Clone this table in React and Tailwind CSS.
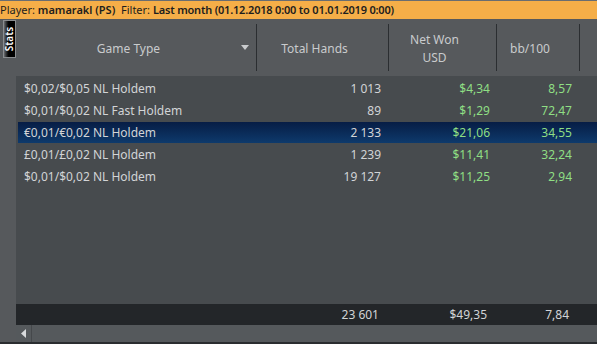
const rows = [
  { game: "$0,02/$0,05 NL Holdem", hands: "1 013", won: "$4,34", bb: "8,57" },
  { game: "$0,01/$0,02 NL Fast Holdem", hands: "89", won: "$1,29", bb: "72,47" },
  { game: "€0,01/€0,02 NL Holdem", hands: "2 133", won: "$21,06", bb: "34,55", selected: true },
  { game: "£0,01/£0,02 NL Holdem", hands: "1 239", won: "$11,41", bb: "32,24" },
  { game: "$0,01/$0,02 NL Holdem", hands: "19 127", won: "$11,25", bb: "2,94" },
];

const Sep = () => <div className="w-px self-stretch my-[5px] bg-[#2b2e31]" />;

export default function App() {
  return (
    <div
      className="w-[597px] h-[344px] overflow-hidden flex flex-col bg-[#56595c] text-[12px] text-[#d2d4d6]"
      style={{ fontFamily: '"Noto Sans", "Open Sans", sans-serif' }}
    >
      <div className="h-px bg-[#6a6d70]" />
      <div className="h-[18px] bg-[#f5ae48] text-[#1d1d1d] text-[11px] leading-[18px] flex whitespace-nowrap">
        <div className="w-[121px]">
          Player: <span className="font-semibold">mamarakl (PS)</span>
        </div>
        <div>
          Filter:{" "}
          <span className="font-semibold tracking-[-0.2px]">Last month (01.12.2018 0:00 to 01.01.2019 0:00)</span>
        </div>
      </div>
      <div className="flex flex-1 min-h-0">
        <div className="w-4 shrink-0 relative">
          <div className="absolute left-[3px] top-px w-[13px] h-[38px] border border-[#8a8d90] bg-gradient-to-r from-[#6a6d70] via-black to-black flex items-center justify-center">
            <span className="block -rotate-90 text-white text-[10px] font-semibold leading-none">Stats</span>
          </div>
        </div>
        <div className="flex-1 flex flex-col min-w-0">
          <div className="h-[57px] flex text-[#c9cbcd] text-[12px]">
            <div className="w-[240px] flex items-center justify-center pt-[3px] pr-[15px] relative">
              <span>Game Type</span>
              <svg className="absolute right-[7px] top-[26px]" width="8" height="5" viewBox="0 0 8 5">
                <path d="M0 0h8L4 5z" fill="#c9cbcd" />
              </svg>
            </div>
            <Sep />
            <div className="w-[131px] flex items-center justify-center pt-[3px] pr-[16px]">Total Hands</div>
            <Sep />
            <div className="w-[107px] flex flex-col items-center justify-center pt-[3px] pr-[16px] leading-[18px]">
              <span>Net Won</span>
              <span>USD</span>
            </div>
            <Sep />
            <div className="w-[82px] flex items-center justify-center pt-[3px] pr-[16px]">bb/100</div>
            <Sep />
          </div>
          <div className="flex-1 bg-[#474b4e] pt-px">
            {rows.map((r) => (
              <div
                key={r.game}
                className={`h-[21px] my-px flex items-center ${
                  r.selected ? "bg-gradient-to-b from-[#071d45] to-[#0e3a6c] ml-[2px] pl-[6px]" : "pl-2"
                }`}
              >
                <div className="w-[233px] whitespace-nowrap">{r.game}</div>
                <div className="w-[132px] text-right pr-2">{r.hands}</div>
                <div className="w-[108px] text-right pr-[7px] text-[#8fdf84]">{r.won}</div>
                <div className="w-[83px] text-right pr-2 text-[#8fdf84]">{r.bb}</div>
              </div>
            ))}
          </div>
          <div className="h-[21px] bg-[#232629] flex items-center text-[#d2d4d6]">
            <div className="w-[241px]" />
            <div className="w-[132px] text-right pr-[10px]">23 601</div>
            <div className="w-[108px] text-right pr-[10px]">$49,35</div>
            <div className="w-[83px] text-right pr-[11px]">7,84</div>
          </div>
          <div className="h-[17px] bg-[#55595c] flex items-center">
            <div className="w-4 h-full flex items-center justify-center border-r border-[#45484b]">
              <svg width="5" height="9" viewBox="0 0 5 9">
                <path d="M5 0v9L0 4.5z" fill="#d8dadc" />
              </svg>
            </div>
          </div>
        </div>
      </div>
      <div className="h-[2px] bg-[#2a2d30]" />
    </div>
  );
}
